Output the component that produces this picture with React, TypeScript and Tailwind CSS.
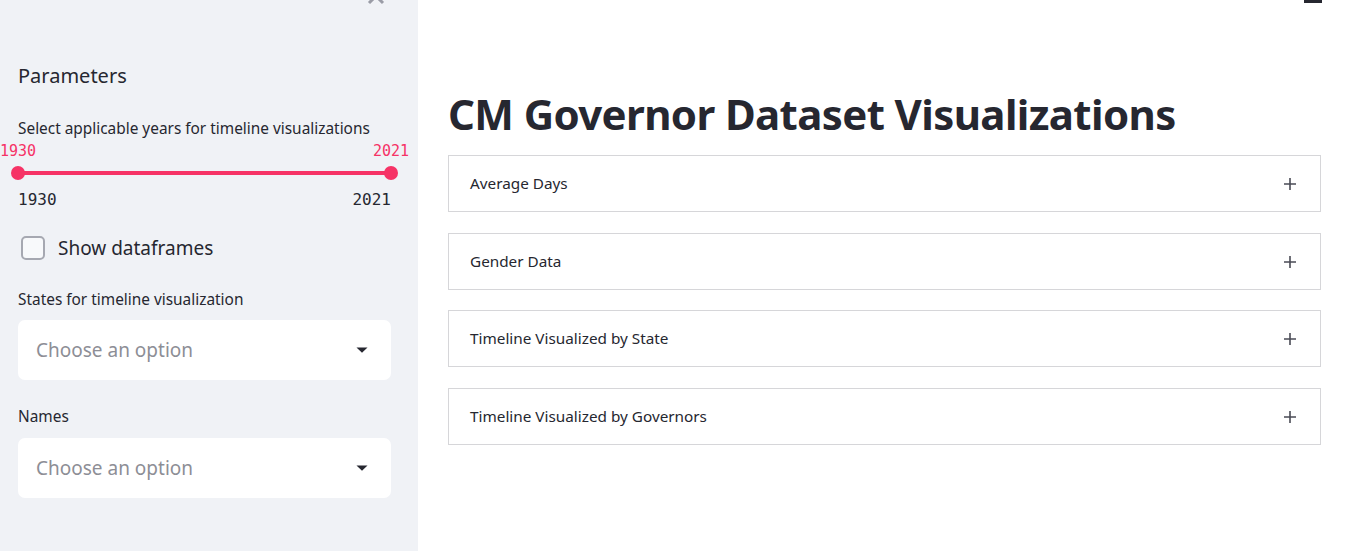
import React from "react";

const sans = { fontFamily: '"Noto Sans", "Open Sans", sans-serif' };
const mono = { fontFamily: '"DejaVu Sans Mono", "Liberation Mono", monospace' };

function Plus() {
  return (
    <svg width="14" height="14" viewBox="0 0 14 14" className="shrink-0">
      <path d="M7 1v12M1 7h12" stroke="#4a4b55" strokeWidth="1.6" />
    </svg>
  );
}

function Caret() {
  return (
    <svg width="12" height="6" viewBox="0 0 12 6">
      <path d="M0.5 0.5h11L6 5.8z" fill="#262730" />
    </svg>
  );
}

function SelectBox() {
  return (
    <div className="flex h-[60px] w-[373px] items-center justify-between rounded-[7px] bg-white pl-[18px] pr-[23px]">
      <span className="text-[19px] text-[#8d8e96]">Choose an option</span>
      <Caret />
    </div>
  );
}

function Expander({ title, mt }: { title: string; mt: string }) {
  return (
    <div className={`flex h-[57px] items-center justify-between border border-[#d6d6d9] bg-white pl-[21px] pr-[23px] ${mt}`}>
      <span className="text-[15.3px] text-[#262730]">{title}</span>
      <Plus />
    </div>
  );
}

export default function App() {
  return (
    <div className="flex h-[551px] w-[1350px] overflow-hidden bg-white text-[#262730]" style={sans}>
      <aside className="relative flex h-full w-[418px] shrink-0 flex-col bg-[#f0f2f6] pl-[18px]">
        <svg className="absolute left-[366px] top-[-13px]" width="20" height="18" viewBox="0 0 20 18">
          <path d="M3 2l14 14M17 2L3 16" stroke="#9a9ca6" strokeWidth="3" />
        </svg>
        <div className="mt-[62px] text-[20px] leading-[28px]">Parameters</div>
        <div className="mt-[29px] text-[15.4px] leading-[20px]">Select applicable years for timeline visualizations</div>
        <div className="ml-[-18px] mt-[3px] flex w-[409px] justify-between text-[15px] leading-[18px] text-[#f63366]" style={mono}>
          <span>1930</span>
          <span>2021</span>
        </div>
        <div className="relative mt-[9px] flex h-[8px] w-[373px] items-center">
          <div className="h-[4px] w-full bg-[#f63366]" />
          <div className="absolute left-[-7px] top-[-3px] h-[14px] w-[14px] rounded-full bg-[#f63366]" />
          <div className="absolute right-[-7px] top-[-3px] h-[14px] w-[14px] rounded-full bg-[#f63366]" />
        </div>
        <div className="mt-[14px] flex w-[373px] justify-between text-[16px] leading-[18px]" style={mono}>
          <span>1930</span>
          <span>2021</span>
        </div>
        <div className="mt-[26px] flex h-[26px] items-center">
          <div className="ml-[3px] h-[24px] w-[24px] rounded-[5px] border-2 border-[#a6a8b1] bg-[#f8f9fb]" />
          <span className="ml-[13px] text-[19px]">Show dataframes</span>
        </div>
        <div className="mt-[29px] text-[15.4px] leading-[20px]">States for timeline visualization</div>
        <div className="mt-[10px]">
          <SelectBox />
        </div>
        <div className="mt-[27px] text-[15.4px] leading-[20px]">Names</div>
        <div className="mt-[11px]">
          <SelectBox />
        </div>
      </aside>
      <main className="relative flex-1 pl-[30px] pr-[29px]">
        <div className="absolute left-[886px] top-0 h-[3px] w-[18px] bg-[#262730]" />
        <h1 className="mt-[88px] text-[42px] font-bold leading-[52px] tracking-[-0.62px]">CM Governor Dataset Visualizations</h1>
        <div className="mt-[15px] flex flex-col">
          <Expander title="Average Days" mt="mt-0" />
          <Expander title="Gender Data" mt="mt-[21px]" />
          <Expander title="Timeline Visualized by State" mt="mt-[20px]" />
          <Expander title="Timeline Visualized by Governors" mt="mt-[21px]" />
        </div>
      </main>
    </div>
  );
}
